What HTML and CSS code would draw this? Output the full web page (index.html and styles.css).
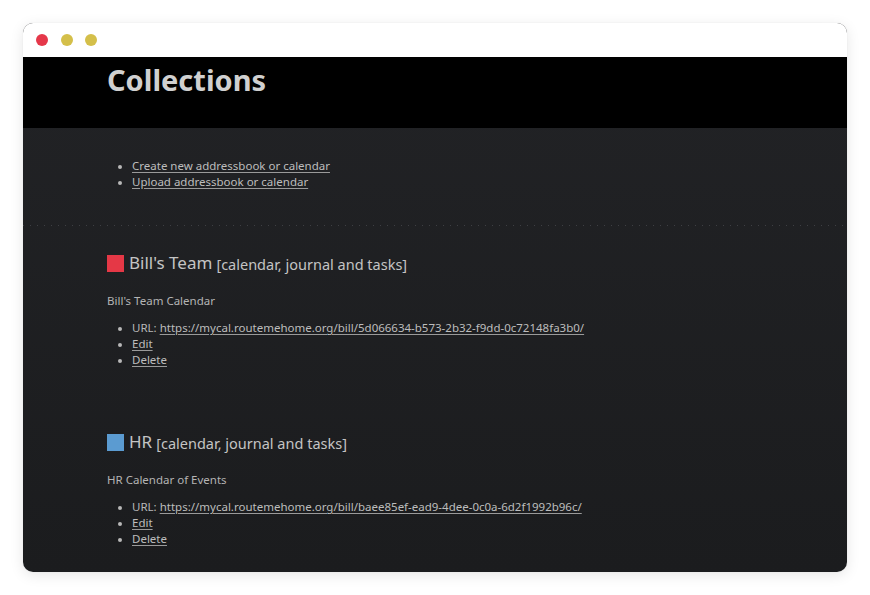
FILE: index.html
```html
<!DOCTYPE html>
<html>
<head>
<meta charset="utf-8">
<link rel="stylesheet" href="styles.css">
</head>
<body>
<div class="window">
  <div class="titlebar">
    <span class="dot red"></span>
    <span class="dot yellow"></span>
    <span class="dot yellow"></span>
  </div>
  <header class="header">
    <h1 class="title">Collections</h1>
  </header>
  <main class="content">
    <ul class="list actions">
      <li><a href="#">Create new addressbook or calendar</a></li>
      <li><a href="#">Upload addressbook or calendar</a></li>
    </ul>
    <div class="separator"></div>
    <section class="collection">
      <h3 class="coll-title"><span class="swatch swatch-red"></span><span class="coll-name">Bill's Team</span> <small class="coll-type">[calendar, journal and tasks]</small></h3>
      <p class="coll-desc">Bill's Team Calendar</p>
      <ul class="list">
        <li>URL: <a href="#">https://mycal.routemehome.org/bill/5d066634-b573-2b32-f9dd-0c72148fa3b0/</a></li>
        <li><a href="#">Edit</a></li>
        <li><a href="#">Delete</a></li>
      </ul>
    </section>
    <section class="collection">
      <h3 class="coll-title"><span class="swatch swatch-blue"></span><span class="coll-name">HR</span> <small class="coll-type">[calendar, journal and tasks]</small></h3>
      <p class="coll-desc">HR Calendar of Events</p>
      <ul class="list">
        <li>URL: <a href="#">https://mycal.routemehome.org/bill/baee85ef-ead9-4dee-0c0a-6d2f1992b96c/</a></li>
        <li><a href="#">Edit</a></li>
        <li><a href="#">Delete</a></li>
      </ul>
    </section>
  </main>
</div>
</body>
</html>
```

FILE: styles.css
```css
html, body {
  margin: 0;
  padding: 0;
  background: #ffffff;
}
body {
  font-family: "Noto Sans", "Open Sans", sans-serif;
  padding: 23px;
}
.window {
  width: 824px;
  height: 549px;
  border-radius: 10px;
  overflow: hidden;
  box-shadow: 0 3px 14px rgba(0, 0, 0, 0.10), 0 0 2px rgba(0, 0, 0, 0.06);
  display: flex;
  flex-direction: column;
  background: linear-gradient(#222326, #1b1c1e);
}
.titlebar {
  height: 34px;
  background: #ffffff;
  display: flex;
  align-items: center;
  gap: 12.5px;
  padding-left: 13px;
  flex-shrink: 0;
}
.dot {
  width: 12px;
  height: 12px;
  border-radius: 50%;
}
.red { background: #e5384a; }
.yellow { background: #d4bf4a; }
.header {
  height: 71px;
  background: #000000;
  padding-left: 84px;
  flex-shrink: 0;
}
.title {
  margin: 0;
  padding-top: 4px;
  font-size: 29px;
  line-height: 38px;
  font-weight: 700;
  color: #d0d0d0;
}
.content {
  padding-left: 84px;
  color: #b8b8b8;
  font-size: 11.5px;
}
.list {
  margin: 0;
  padding-left: 25px;
  line-height: 16px;
}
.list li::marker {
  font-size: 10px;
}
.actions {
  padding-top: 30px;
}
a {
  color: #bdbdbd;
  text-decoration: underline;
  text-underline-offset: 2px;
  text-decoration-color: #9a9a9a;
}
.separator {
  margin: 35px 0 0 -84px;
  height: 1px;
  background: repeating-linear-gradient(90deg, #3e3f43 0 1px, transparent 1px 7px);
}
.collection {
  padding-bottom: 37px;
}
.coll-title {
  margin: 25px 0 0;
  display: flex;
  align-items: center;
  font-weight: 400;
  line-height: 22px;
  color: #c4c4c4;
}
.swatch {
  width: 17px;
  height: 17px;
  margin-right: 5px;
}
.swatch-red { background: #e53846; }
.swatch-blue { background: #5b9bd1; }
.coll-name {
  font-size: 17px;
}
.coll-type {
  font-size: 14.5px;
  margin-left: 4px;
  padding-top: 2px;
}
.coll-desc {
  margin: 18px 0 11px;
  font-size: 11.5px;
  line-height: 16px;
  color: #b4b4b4;
}
```
